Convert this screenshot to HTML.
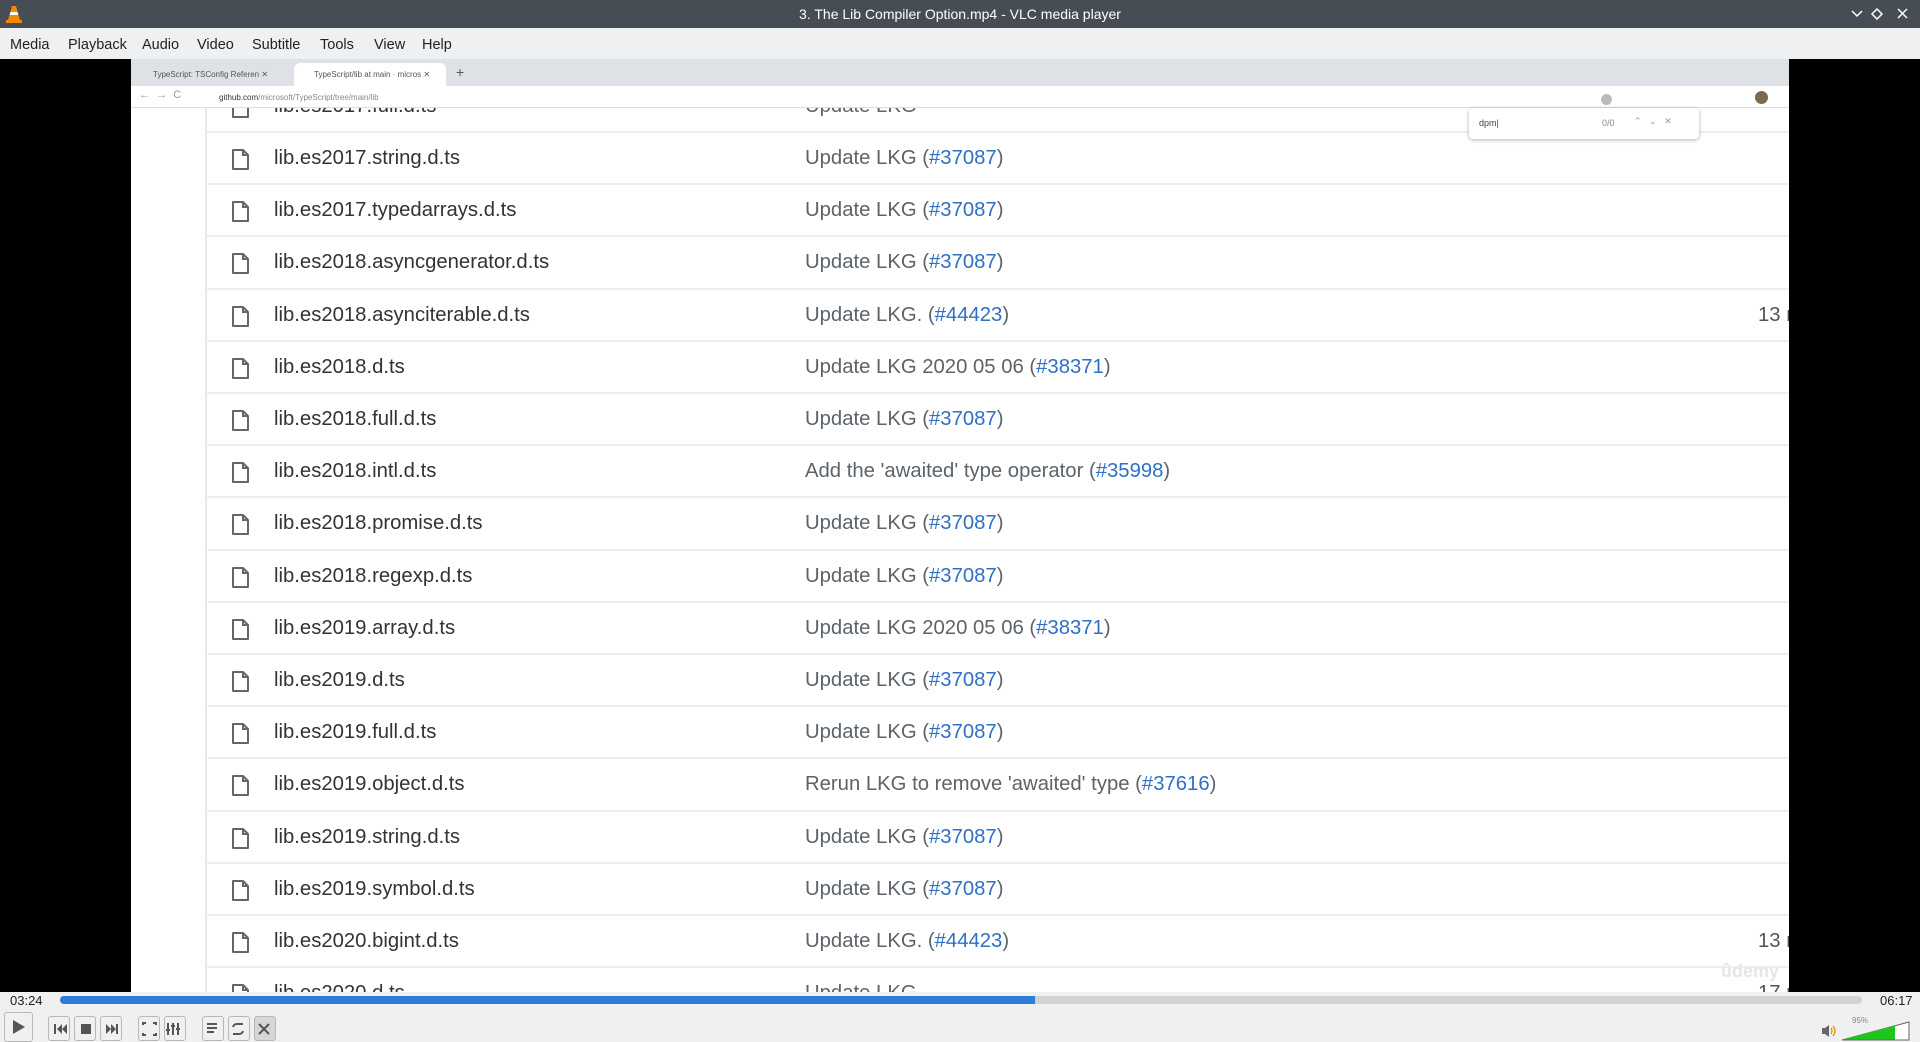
<!DOCTYPE html>
<html><head><meta charset="utf-8"><style>
*{margin:0;padding:0;box-sizing:border-box}
body{width:1920px;height:1042px;overflow:hidden;background:#000;font-family:"Liberation Sans",sans-serif;position:relative}
.abs{position:absolute}
#title{left:0;top:0;width:1920px;height:28px;background:#474d55;color:#fff;font-size:14px;text-align:center;line-height:28px}
#menu{left:0;top:28px;width:1920px;height:31px;background:#eff0f1;font-size:14.5px;color:#222}
#menu span{position:absolute;top:9px}
#vid{left:131px;top:59px;width:1658px;height:933px;background:#fff;overflow:hidden}
.row{position:absolute;left:75px;width:1600px;height:52px;border-top:2px solid #eceef0;font-size:20.3px;color:#333}
.row .ic{position:absolute;left:25px;top:15px;width:19px;height:23px}
.row .fn{position:absolute;left:68px;top:14px}
.row .msg{position:absolute;left:599px;top:14px;color:#5c636b}
.row .msg b{font-weight:normal;color:#2f6fc4}
.row .ag{position:absolute;left:1552px;top:14px;color:#555}
#ctl{left:0;top:992px;width:1920px;height:50px;background:#eff0f1}
.btn{position:absolute;top:1016px;height:25px;border:1px solid #b8b8b8;border-radius:3px;background:#eff0f1}
.tb{z-index:2}
</style></head><body>
<div id="title" class="abs">3. The Lib Compiler Option.mp4 - VLC media player</div>
<svg class="abs" style="left:6px;top:5px" width="16" height="18" viewBox="0 0 16 18"><path d="M6 1h4l4 14H2z" fill="#f08a00"/><path d="M4.5 7h7l.8 3H3.7z" fill="#fff"/><rect x="0" y="15" width="16" height="3" fill="#f08a00"/></svg>
<svg class="abs" style="left:1850px;top:8px" width="64" height="12" viewBox="0 0 64 12"><path d="M2 3l5 5 5-5" stroke="#fff" fill="none" stroke-width="1.5"/><path d="M27 1l5 5-5 5-5-5z" stroke="#fff" fill="none" stroke-width="1.5"/><path d="M48 1l9 9M57 1l-9 9" stroke="#fff" stroke-width="1.5"/></svg>
<div id="menu" class="abs"><span style="left:10px">Media</span><span style="left:68px">Playback</span><span style="left:142px">Audio</span><span style="left:197px">Video</span><span style="left:252px">Subtitle</span><span style="left:320px">Tools</span><span style="left:374px">View</span><span style="left:422px">Help</span></div>
<div id="vid" class="abs">
 <div id="rows"></div>
 <div class="abs tb" style="left:0;top:0;width:1658px;height:27px;background:#dee1e6"></div>
 <div class="abs tb" style="left:8px;top:4px;width:150px;height:23px;font-size:8px;color:#555;line-height:23px;padding-left:14px">TypeScript: TSConfig Referen ✕</div>
 <div class="abs tb" style="left:163px;top:4px;width:152px;height:23px;background:#fff;border-radius:6px 6px 0 0;font-size:8px;color:#555;line-height:23px;padding-left:20px">TypeScript/lib at main · micros ✕</div>
 <div class="abs tb" style="left:325px;top:5px;font-size:14px;color:#555">+</div>
 <div class="abs tb" style="left:0;top:27px;width:1658px;height:22px;background:#fff;border-bottom:1px solid #ddd"></div>
 <div class="abs tb" style="left:8px;top:30px;font-size:11px;color:#999">←&nbsp;&nbsp;→&nbsp;&nbsp;C</div>
 <div class="abs tb" style="left:68px;top:30px;width:1520px;height:17px;background:#fff;font-size:8px;line-height:17px;padding-left:20px;color:#333">github.com<span style="color:#888">/microsoft/TypeScript/tree/main/lib</span></div>
 <div class="abs tb" style="left:1470px;top:33px;width:130px;height:11px"><span style="display:inline-block;width:11px;height:11px;border-radius:50%;background:#bbb"></span></div>
 <div class="abs tb" style="left:1624px;top:32px;width:13px;height:13px;border-radius:50%;background:#7a6a50"></div>
 <div class="abs" style="left:74px;top:49px;width:2px;height:884px;background:#e8eaed"></div>
 <div class="abs tb" style="left:1338px;top:49px;width:230px;height:31px;background:#fff;border-radius:4px;box-shadow:0 1px 4px rgba(0,0,0,.3);font-size:9px;color:#444"><span class="abs" style="left:10px;top:10px">dpm|</span><span class="abs" style="left:133px;top:10px;color:#888">0/0</span><span class="abs" style="left:165px;top:8px;color:#999">⌃&nbsp;&nbsp;&nbsp;⌄&nbsp;&nbsp;&nbsp;✕</span></div>
 <div class="abs tb" style="left:1590px;top:902px;font-size:18px;color:#e6e6e6;font-weight:bold">ûdemy</div>
</div>
<div id="ctl" class="abs"></div>
<div class="abs" style="left:10px;top:993px;font-size:13px;color:#222">03:24</div>
<div class="abs" style="left:1880px;top:993px;font-size:13px;color:#222">06:17</div>
<div class="abs" style="left:60px;top:996px;width:1802px;height:8px;background:#d0d2d4;border-radius:4px"></div>
<div class="abs" style="left:60px;top:996px;width:975px;height:8px;background:#2d7ed4;border-radius:4px 0 0 4px"></div>
<div class="btn" style="left:4px;top:1012px;width:29px;height:30px"></div>
<svg class="abs" style="left:12px;top:1019px" width="14" height="16"><path d="M1 1l12 7-12 7z" fill="#555"/></svg>
<div class="btn" style="left:48px;width:22px"></div><div class="btn" style="left:74px;width:22px"></div><div class="btn" style="left:100px;width:22px"></div>
<div class="btn" style="left:138px;width:22px"></div><div class="btn" style="left:164px;width:22px"></div>
<div class="btn" style="left:202px;width:22px"></div><div class="btn" style="left:228px;width:22px"></div><div class="btn" style="left:254px;width:22px;background:#d6d6d6"></div>
<svg class="abs" style="left:48px;top:1017px" width="230" height="24"><g fill="#555"><path d="M6 7h2v10H6zM14 7v10l-5-5zM19 7v10l-5-5z"/><rect x="33" y="7" width="10" height="10"/><path d="M58 7v10l5-5zM63 7v10l5-5zM68 7h2v10h-2z"/></g><g stroke="#555" stroke-width="2" fill="none"><path d="M95 8V6h3M105 6h3v2M108 16v2h-3M98 18h-3v-2"/><path d="M120 6v12M125 6v12M130 6v12M118 13h4M123 9h4M128 12h4"/><path d="M159 7h10M159 11h10M159 15h7"/><path d="M185 10a4 4 0 0 1 4-3h6M195 14a4 4 0 0 1-4 3h-6"/><path d="M211 7l10 10M211 17l10-10"/></g></svg>
<svg class="abs" style="left:1820px;top:1020px" width="90" height="22"><path d="M2 14h3l4 3V5L5 8H2z" fill="#666"/><path d="M11 8q2 3 0 6M13 6q4 5 0 10" stroke="#f08a00" fill="none" stroke-width="1.3"/><path d="M22 20L89 2v18z" fill="#fff" stroke="#666"/><path d="M23 19.5L75 5.5v14z" fill="#1ec51e"/></svg>
<div class="abs" style="left:1852px;top:1016px;font-size:8px;color:#888">95%</div>
<script>
var d=[["lib.es2017.full.d.ts","Update LKG",""],
["lib.es2017.string.d.ts","Update LKG (","#37087"],
["lib.es2017.typedarrays.d.ts","Update LKG (","#37087"],
["lib.es2018.asyncgenerator.d.ts","Update LKG (","#37087"],
["lib.es2018.asynciterable.d.ts","Update LKG. (","#44423","13 r"],
["lib.es2018.d.ts","Update LKG 2020 05 06 (","#38371"],
["lib.es2018.full.d.ts","Update LKG (","#37087"],
["lib.es2018.intl.d.ts","Add the 'awaited' type operator (","#35998"],
["lib.es2018.promise.d.ts","Update LKG (","#37087"],
["lib.es2018.regexp.d.ts","Update LKG (","#37087"],
["lib.es2019.array.d.ts","Update LKG 2020 05 06 (","#38371"],
["lib.es2019.d.ts","Update LKG (","#37087"],
["lib.es2019.full.d.ts","Update LKG (","#37087"],
["lib.es2019.object.d.ts","Rerun LKG to remove 'awaited' type (","#37616"],
["lib.es2019.string.d.ts","Update LKG (","#37087"],
["lib.es2019.symbol.d.ts","Update LKG (","#37087"],
["lib.es2020.bigint.d.ts","Update LKG. (","#44423","13 r"],
["lib.es2020.d.ts","Update LKG","","17 r"]];
var h="";
d.forEach(function(r,i){var t=131-59+(i-1)*52.2;
h+='<div class="row" style="top:'+t+'px"><svg class="ic" viewBox="0 0 19 23"><path d="M2 2h10l5 5v14H2z" fill="none" stroke="#666" stroke-width="2" stroke-linejoin="round"/><path d="M12 2v5h5" fill="none" stroke="#666" stroke-width="2"/></svg><span class="fn">'+r[0]+'</span><span class="msg">'+r[1]+(r[2]?'<b>'+r[2]+'</b>)':'')+'</span>'+(r[3]?'<span class="ag">'+r[3]+'</span>':'')+'</div>';});
document.getElementById('rows').innerHTML=h;
</script>
</body></html>
